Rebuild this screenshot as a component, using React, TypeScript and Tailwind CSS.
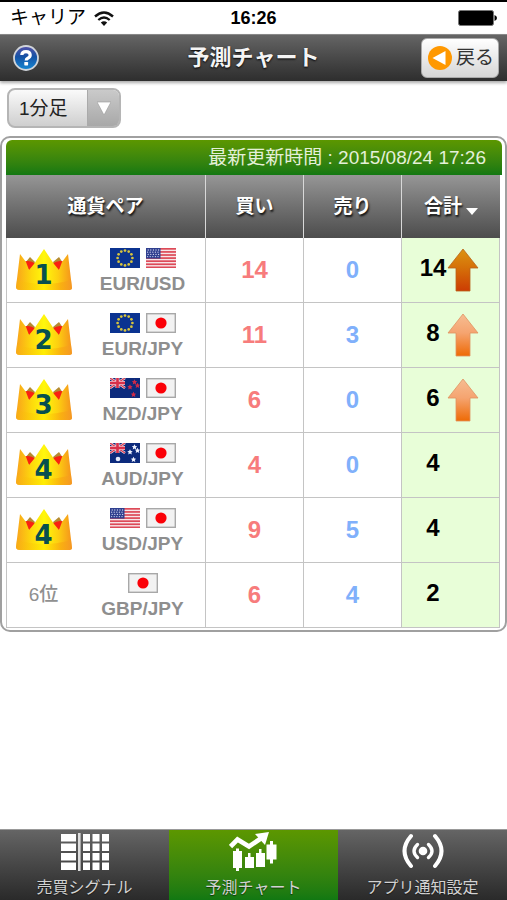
import { useState } from 'react';
import type { ReactNode } from 'react';

type FlagCode = 'eu' | 'us' | 'jp' | 'nz' | 'au';
type Row = {
  rank: number;
  pair: string;
  flags: FlagCode[];
  buy: number;
  sell: number;
  total: number;
  trend?: 'strong' | 'weak';
};

const ROWS: Row[] = [
  { rank: 1, pair: 'EUR/USD', flags: ['eu', 'us'], buy: 14, sell: 0, total: 14, trend: 'strong' },
  { rank: 2, pair: 'EUR/JPY', flags: ['eu', 'jp'], buy: 11, sell: 3, total: 8, trend: 'weak' },
  { rank: 3, pair: 'NZD/JPY', flags: ['nz', 'jp'], buy: 6, sell: 0, total: 6, trend: 'weak' },
  { rank: 4, pair: 'AUD/JPY', flags: ['au', 'jp'], buy: 4, sell: 0, total: 4 },
  { rank: 4, pair: 'USD/JPY', flags: ['us', 'jp'], buy: 9, sell: 5, total: 4 },
  { rank: 6, pair: 'GBP/JPY', flags: ['jp'], buy: 6, sell: 4, total: 2 },
];

function UnionJack() {
  return (
    <g>
      <path d="M0 0L15 10M15 0L0 10" stroke="#f3dfe6" strokeWidth="2.6" />
      <path d="M0 0L15 10M15 0L0 10" stroke="#d63a50" strokeWidth="1.2" />
      <path d="M7.5 0V10M0 5H15" stroke="#f0c6d0" strokeWidth="4" />
      <path d="M7.5 0V10M0 5H15" stroke="#d8304a" strokeWidth="2.6" />
    </g>
  );
}

function Flag({ code }: { code: FlagCode }) {
  let art: ReactNode;
  if (code === 'jp') {
    art = (
      <>
        <rect x="0.7" y="0.7" width="28.6" height="18.6" fill="#f2f2f2" stroke="#a8a8a8" strokeWidth="1.4" />
        <circle cx="15" cy="10" r="5.6" fill="#fb0007" />
      </>
    );
  } else if (code === 'us') {
    art = (
      <>
        <rect width="30" height="20" fill="#f7e6e8" />
        {[0, 1, 2, 3, 4, 5, 6].map((i) => (
          <rect key={i} y={i * 3.08} width="30" height="1.7" fill="#dd4a58" />
        ))}
        <rect width="14.5" height="10.6" fill="#2f3f8f" />
        {[2, 4.2, 6.4, 8.6].map((y, r) =>
          [2.2, 4.8, 7.4, 10, 12.6].map((x) => (
            <circle key={`${x}-${y}`} cx={x - (r % 2) * 0.6} cy={y} r="0.65" fill="#cfd4ee" />
          )),
        )}
      </>
    );
  } else if (code === 'eu') {
    art = (
      <>
        <rect width="30" height="20" fill="#0b3390" />
        {Array.from({ length: 12 }, (_, i) => {
          const a = (i * Math.PI) / 6;
          return <circle key={i} cx={15 + 7.4 * Math.sin(a)} cy={10 - 7.4 * Math.cos(a)} r="1.35" fill="#d9c53c" />;
        })}
      </>
    );
  } else {
    const stars = [[24.5, 4], [20, 9], [27.5, 7.5], [23.5, 16.5]];
    art = (
      <>
        <rect width="30" height="20" fill="#0c2a7c" />
        <UnionJack />
        {stars.map(([x, y]) => (
          <path
            key={x}
            transform={`translate(${x} ${y})`}
            d="M0-2.7L.9-.9 2.7-.8 1.3.5 1.8 2.4 0 1.4-1.8 2.4-1.3.5-2.7-.8-.9-.9z"
            fill={code === 'nz' ? '#cf2a48' : '#eef2ff'}
          />
        ))}
        {code === 'au' && <circle cx="8" cy="16" r="2.3" fill="#e4eafc" />}
      </>
    );
  }
  return (
    <svg viewBox="0 0 30 20" className="h-5 w-[30px] overflow-hidden" aria-hidden="true">
      {art}
    </svg>
  );
}

function Crown({ rank }: { rank: number }) {
  return (
    <div className="relative mx-auto h-[42px] w-14">
      <svg viewBox="0 0 56 42" className="h-full w-full" aria-hidden="true">
        <defs>
          <linearGradient id="gold" x1="0" x2="1" y1="0" y2="0">
            <stop offset="0" stopColor="#f9a21c" />
            <stop offset="0.28" stopColor="#fdd90c" />
            <stop offset="0.5" stopColor="#fff80c" />
            <stop offset="0.75" stopColor="#fdcf10" />
            <stop offset="1" stopColor="#f5921d" />
          </linearGradient>
          <linearGradient id="goldBase" x1="0" x2="1" y1="0" y2="0">
            <stop offset="0" stopColor="#f8ac15" />
            <stop offset="0.5" stopColor="#ffe800" />
            <stop offset="0.8" stopColor="#f9a810" />
            <stop offset="1" stopColor="#f59a26" />
          </linearGradient>
        </defs>
        <path d="M9 14L14 8L19 13L16 21L11 20zM37 13L43 8L47 14L45 20L39 21z" fill="#b58b31" />
        <path d="M8 13Q13 10 20 15L14 23zM36 15Q43 10 48 13L42 23z" fill="#f92110" />
        <path
          d="M4 5L10 13L13 21L18 15L20 12L28 0L36 12L38 15L43 21L46 13L52 5L56 39Q56 41 52 41H4Q0 41 0 38z"
          fill="url(#gold)"
        />
        <path d="M1 31Q28 39 55 31L56 39Q56 41 52 41H4Q0 41 0 38z" fill="url(#goldBase)" opacity="0.7" />
      </svg>
      <span className="absolute inset-x-0 top-3 text-center font-['DejaVu_Sans',sans-serif] text-[26px] leading-[28px] font-bold text-[#07504f]">
        {rank}
      </span>
    </div>
  );
}

function TrendArrow({ kind }: { kind: 'strong' | 'weak' }) {
  const strong = kind === 'strong';
  return (
    <svg viewBox="0 0 32 44" className="h-11 w-8" role="img" aria-label="上昇">
      <defs>
        <linearGradient id={`trend-${kind}`} x1="0" x2="0" y1="0" y2="1">
          <stop offset="0" stopColor={strong ? '#dc9412' : '#f6bd92'} />
          <stop offset="0.45" stopColor={strong ? '#d57009' : '#f5a470'} />
          <stop offset="1" stopColor={strong ? '#cc3c03' : '#ee6a05'} />
        </linearGradient>
      </defs>
      <path
        d="M16 1L31 20H23V43H9V20H1z"
        fill={`url(#trend-${kind})`}
        stroke={strong ? '#b9621c' : '#df9361'}
        strokeWidth="0.8"
      />
    </svg>
  );
}

function StatusBar() {
  return (
    <div className="grid h-[34px] grid-cols-3 items-center border-t-2 border-black bg-white px-[10px] text-black">
      <div className="flex items-center gap-2 text-[19px] leading-6">
        キャリア
        <svg viewBox="0 0 20 15" className="h-[15px] w-5" aria-hidden="true">
          <path d="M1 5.5Q10-2.5 19 5.5" fill="none" stroke="#111" strokeWidth="2.4" />
          <path d="M4.3 9Q10 4 15.7 9" fill="none" stroke="#111" strokeWidth="2.3" />
          <path d="M6.8 11.6Q10 8.8 13.2 11.6L10 15z" fill="#111" />
        </svg>
      </div>
      <div className="text-center text-lg leading-6 font-bold">16:26</div>
      <svg viewBox="0 0 39 16" className="h-4 w-[39px] justify-self-end" aria-hidden="true">
        <rect x="0.5" y="0.5" width="35" height="15" rx="2" fill="#000" stroke="#777" />
        <path d="M36.5 5Q39 6 39 8T36.5 11z" fill="#000" />
      </svg>
    </div>
  );
}

function Header() {
  return (
    <header className="grid h-[47px] grid-cols-[1fr_auto_1fr] items-center border-t border-[#888] bg-linear-to-b from-[#656565] to-[#2e2e2e] px-2 shadow-[0_2px_3px_#0005]">
      <button type="button" aria-label="ヘルプ" className="ml-1 h-7 w-7">
        <svg viewBox="0 0 28 28" className="h-7 w-7" aria-hidden="true">
          <defs>
            <linearGradient id="help" x1="0" x2="0" y1="0" y2="1">
              <stop offset="0" stopColor="#5450a8" />
              <stop offset="0.45" stopColor="#1552a5" />
              <stop offset="1" stopColor="#1689d4" />
            </linearGradient>
          </defs>
          <circle cx="14" cy="14" r="12" fill="url(#help)" stroke="#d0d4da" strokeWidth="1.8" />
          <path
            d="M9.8 11Q10 7.6 14 7.6T18.2 11Q18.2 13.2 15.8 14.2Q14.2 15 14.2 16.4"
            fill="none"
            stroke="#fff"
            strokeWidth="3.2"
          />
          <rect x="12.3" y="18" width="3.8" height="3.4" rx="0.6" fill="#fff" />
        </svg>
      </button>
      <h1 className="text-[22px] leading-8 font-bold text-[#f4f4f4] [text-shadow:0_1px_2px_#000]">予測チャート</h1>
      <button
        type="button"
        className="flex h-10 items-center gap-1 justify-self-end rounded-md border border-[#aaa] bg-linear-to-b from-white to-[#d6d6d6] pr-1 pl-1.5 text-[19px] leading-6 text-[#333]"
      >
        <svg viewBox="0 0 24 24" className="h-6 w-6" aria-hidden="true">
          <circle cx="12" cy="12" r="12" fill="#ff9800" />
          <path d="M4.5 12L17.5 5V19z" fill="#fff" />
        </svg>
        戻る
      </button>
    </header>
  );
}

const TH =
  'border-r border-[#d8d8d8] bg-linear-to-b from-[#969696] to-[#4d4d4d] p-0 pt-0.5 text-[19px] font-bold text-white [text-shadow:1px_2px_2px_#111] last:border-r-0';
const TD = 'border-r border-b border-[#c4c4c4] p-0 text-center';

function PairTable() {
  return (
    <section className="rounded-[10px] border-2 border-[#a0a0a0] bg-white pt-0.5 pr-[3px] pb-0.5 pl-1">
      <p className="h-[35px] rounded-t-md bg-linear-to-b from-[#5c9700] to-[#117812] pr-4 text-right text-[19px] leading-[35px] text-[#e4f0d8]">
        最新更新時間 : 2015/08/24 17:26
      </p>
      <div className="pr-0.5">
        <table className="w-full table-fixed border-separate border-spacing-0">
          <colgroup>
            <col className="w-[74px]" />
            <col />
            <col className="w-[98px]" />
            <col className="w-[98px]" />
            <col className="w-[98px]" />
          </colgroup>
          <thead>
            <tr className="h-[63px]">
              <th colSpan={2} className={TH}>通貨ペア</th>
              <th className={TH}>買い</th>
              <th className={TH}>売り</th>
              <th className={TH}>
                <button type="button" className="inline-flex items-center gap-1 font-bold [text-shadow:inherit]">
                  合計
                  <svg viewBox="0 0 12 8" className="mt-1.5 h-2 w-3" aria-hidden="true">
                    <path d="M0 1H12L6 8z" fill="#fff" />
                  </svg>
                </button>
              </th>
            </tr>
          </thead>
          <tbody>
            {ROWS.map((row) => (
              <tr key={row.pair} className="h-[65px]">
                <td className="border-b border-l border-[#c4c4c4] p-0 text-center text-[19px] font-medium text-[#909090]">
                  {row.rank < 6 ? <Crown rank={row.rank} /> : `${row.rank}位`}
                </td>
                <td className={TD}>
                  <div className="mt-1 flex justify-center gap-1.5">
                    {row.flags.map((code) => (
                      <Flag key={code} code={code} />
                    ))}
                  </div>
                  <div className="mt-1 text-[19px] leading-6 font-bold text-[#8e8e8e]">{row.pair}</div>
                </td>
                <td className={`${TD} text-2xl font-bold text-[#f77c7c]`}>{row.buy}</td>
                <td className={`${TD} text-2xl font-bold text-[#80b0fb]`}>{row.sell}</td>
                <td className={`${TD} bg-[#e8fed8] text-2xl font-bold text-black`}>
                  <div className="flex h-11 items-center pl-[17px]">
                    <span className="w-7 pb-1">{row.total}</span>
                    {row.trend && <TrendArrow kind={row.trend} />}
                  </div>
                </td>
              </tr>
            ))}
          </tbody>
        </table>
      </div>
    </section>
  );
}

function GridIcon() {
  return (
    <svg viewBox="0 0 50 40" className="h-10 w-[50px]" fill="#fff" aria-hidden="true">
      {[2, 11.5, 21, 30.5].map((y) => (
        <g key={y}>
          <rect x="1" y={y} width="15" height="7.5" />
          <rect x="23" y={y} width="7" height="7.5" />
          <rect x="32.5" y={y} width="7" height="7.5" />
          <rect x="42" y={y} width="7" height="7.5" />
        </g>
      ))}
      <rect x="18" y="1" width="2.6" height="38" fill="#ddd" />
    </svg>
  );
}

function ChartIcon() {
  return (
    <svg viewBox="0 0 50 40" className="h-10 w-[50px]" fill="#fff" aria-hidden="true">
      <path d="M1.5 14.5L8.5 7.5L20 14.5L34 5" fill="none" stroke="#fff" strokeWidth="4.6" />
      <path d="M26 2L40 0L36 13z" />
      <path d="M7 16.500h3v2.500h3v17h-3v3h-3v-3h-3v-17h3zM19 21h2.500v4h3.500v11h-9v-11h3zM30 17h2.500v4h3.500v14h-9v-14h3zM41 9h3v3.500h3.500v15h-3.500v4h-3v-4h-3.500v-15h3.500z" />
    </svg>
  );
}

function BroadcastIcon() {
  return (
    <svg viewBox="0 0 50 40" className="h-10 w-[50px]" fill="none" stroke="#fff" strokeLinecap="round" aria-hidden="true">
      <circle cx="25" cy="19" r="4.3" fill="#fff" stroke="none" />
      <path d="M19.500 12.500Q12.500 19 19.500 25.500M30.500 12.500Q37.500 19 30.500 25.500" strokeWidth="3.4" />
      <path d="M13 4Q0 19 13 34M37 4Q50 19 37 34" strokeWidth="4" />
    </svg>
  );
}

const TABS = [
  { label: '売買シグナル', icon: <GridIcon /> },
  { label: '予測チャート', icon: <ChartIcon /> },
  { label: 'アプリ通知設定', icon: <BroadcastIcon /> },
];

export default function App() {
  const [tab, setTab] = useState(1);
  return (
    <div className="flex min-h-screen flex-col bg-white font-['Liberation_Sans','Noto_Sans_CJK_JP',sans-serif]">
      <StatusBar />
      <Header />
      <main className="flex-1">
        <div className="px-[7px] pt-[7px] pb-2">
          <div className="relative inline-flex h-10 w-[114px] overflow-hidden rounded-lg border-2 border-[#b5b5b5] bg-linear-to-b from-[#fafafa] to-[#cfcfcf]">
            <select
              aria-label="足種"
              defaultValue="1"
              className="h-full w-full appearance-none bg-transparent pt-0.5 pr-9 pl-2.5 text-[19px] leading-6 text-[#222] outline-none"
            >
              <option value="1">1分足</option>
              <option value="5">5分足</option>
              <option value="60">1時間足</option>
            </select>
            <span className="pointer-events-none absolute inset-y-0 right-0 flex w-8 items-center justify-center border-l border-[#aaa] bg-linear-to-b from-[#cacaca] to-[#a8a8a8]">
              <svg viewBox="0 0 14 14" className="h-[14px] w-[14px]" aria-hidden="true">
                <path d="M0 1H14L7 14z" fill="#fff" stroke="#999" strokeWidth="0.6" />
              </svg>
            </span>
          </div>
        </div>
        <PairTable />
      </main>
      <nav className="grid h-[71px] grid-cols-3 border-t border-b border-t-[#999] border-b-black">
        {TABS.map((item, i) => (
          <button
            key={item.label}
            type="button"
            aria-current={tab === i ? 'page' : undefined}
            onClick={() => setTab(i)}
            className={`flex flex-col items-center gap-1 pt-0.5 text-base leading-6 text-[#d2d2d2] [text-shadow:0_1px_1px_#0008] ${
              tab === i ? 'bg-linear-to-b from-[#5c9700] to-[#117812]' : 'bg-linear-to-b from-[#656565] to-[#2a2a2a]'
            }`}
          >
            {item.icon}
            <span>{item.label}</span>
          </button>
        ))}
      </nav>
    </div>
  );
}
